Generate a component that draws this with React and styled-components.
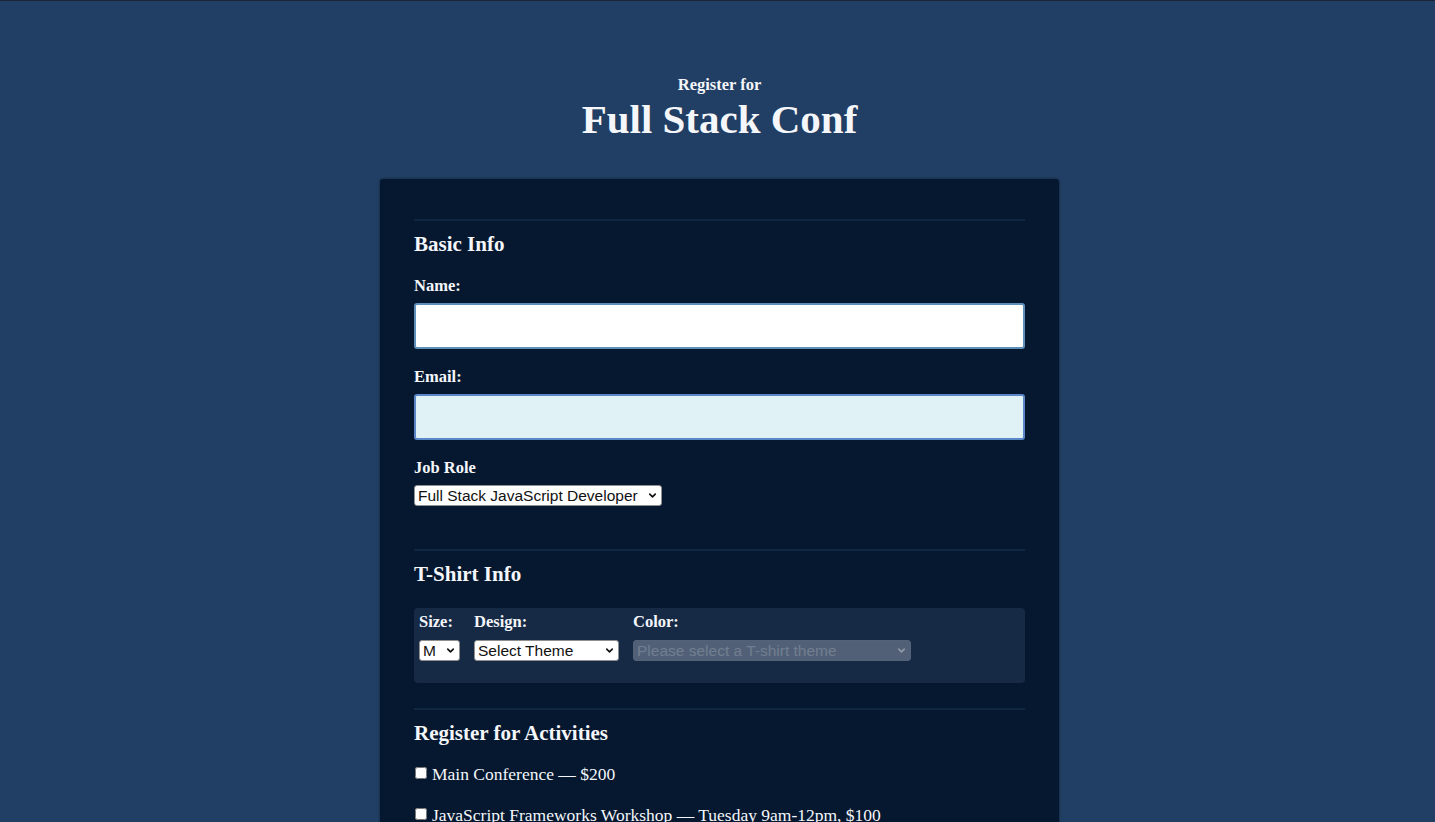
import React, { useState } from "react";
import styled, { createGlobalStyle } from "styled-components";
import { ChevronDown } from "lucide-react";

const GlobalStyle = createGlobalStyle`
  html, body {
    margin: 0;
    padding: 0;
  }
  body {
    background: #213e64;
    border-top: 1px solid #1a2436;
    padding-left: 4px;
    font-family: "Liberation Serif", "Times New Roman", serif;
    color: #f4f6fa;
  }
`;

const activities = [
  "Main Conference — $200",
  "JavaScript Frameworks Workshop — Tuesday 9am-12pm, $100",
  "JavaScript Libraries Workshop — Tuesday 1pm-4pm, $100",
  "Express Workshop — Tuesday 9am-12pm, $100",
  "Node.js Workshop — Tuesday 1pm-4pm, $100",
];

const App = () => {
  const [role, setRole] = useState("full-stack");
  const [size, setSize] = useState("medium");
  const [design, setDesign] = useState("");

  return (
    <>
      <GlobalStyle />
      <Header>
        <Kicker>Register for</Kicker>
        <Title>Full Stack Conf</Title>
      </Header>
      <Card>
        <Section>
          <Legend>Basic Info</Legend>
          <Label htmlFor="name">Name:</Label>
          <TextInput id="name" type="text" />
          <Label htmlFor="mail">Email:</Label>
          <TextInput id="mail" type="email" focused />
          <Label htmlFor="title">Job Role</Label>
          <SelectWrap>
            <Select
              id="title"
              width={248}
              value={role}
              onChange={(e) => setRole(e.target.value)}
            >
              <option value="full-stack">Full Stack JavaScript Developer</option>
              <option value="front-end">Front End Developer</option>
              <option value="back-end">Back End Developer</option>
              <option value="other">Other</option>
            </Select>
            <Chevron />
          </SelectWrap>
        </Section>

        <Section gapTop={43}>
          <Legend>T-Shirt Info</Legend>
          <ShirtBox>
            <ShirtCol>
              <Label htmlFor="size">Size:</Label>
              <SelectWrap>
                <Select
                  id="size"
                  width={41}
                  value={size}
                  onChange={(e) => setSize(e.target.value)}
                >
                  <option value="small">S</option>
                  <option value="medium">M</option>
                  <option value="large">L</option>
                </Select>
                <Chevron />
              </SelectWrap>
            </ShirtCol>
            <ShirtCol>
              <Label htmlFor="design">Design:</Label>
              <SelectWrap>
                <Select
                  id="design"
                  width={145}
                  value={design}
                  onChange={(e) => setDesign(e.target.value)}
                >
                  <option value="">Select Theme</option>
                  <option value="js puns">Theme - JS Puns</option>
                  <option value="heart js">Theme - I ♥ JS</option>
                </Select>
                <Chevron />
              </SelectWrap>
            </ShirtCol>
            <ShirtCol>
              <Label htmlFor="color">Color:</Label>
              <SelectWrap>
                <Select id="color" width={278} disabled defaultValue="">
                  <option value="">Please select a T-shirt theme</option>
                </Select>
                <Chevron disabled />
              </SelectWrap>
            </ShirtCol>
          </ShirtBox>
        </Section>

        <Section gapTop={25}>
          <Legend>Register for Activities</Legend>
          <ActivityList>
            {activities.map((a) => (
              <Activity key={a}>
                <input type="checkbox" />
                <span>{a}</span>
              </Activity>
            ))}
          </ActivityList>
        </Section>
      </Card>
    </>
  );
};

export default App;

const Header = styled.header`
  display: flex;
  flex-direction: column;
  align-items: center;
  padding-top: 72px;
  margin-bottom: 38px;
`;

const Kicker = styled.div`
  font-size: 16.5px;
  font-weight: 700;
  line-height: 24px;
`;

const Title = styled.h1`
  margin: 0;
  font-size: 41px;
  font-weight: 700;
  line-height: 44px;
`;

const Card = styled.main`
  width: 679px;
  margin: 0 auto;
  box-sizing: border-box;
  padding: 40px 34px 60px;
  background: #051830;
  border-radius: 3px;
  box-shadow: 0 0 3px rgba(0, 0, 0, 0.45);
`;

const Section = styled.fieldset`
  margin: ${(p) => p.gapTop || 0}px 0 0;
  padding: 0;
  border: none;
  border-top: 2px solid #0f2741;
  display: flex;
  flex-direction: column;
  align-items: flex-start;
`;

const Legend = styled.h2`
  margin: 9px 0 17px;
  font-size: 21px;
  font-weight: 700;
  line-height: 28px;
`;

const Label = styled.label`
  display: block;
  font-size: 16.5px;
  font-weight: 700;
  line-height: 22px;
  margin-bottom: 6px;
`;

const TextInput = styled.input`
  width: 100%;
  height: 46px;
  box-sizing: border-box;
  margin-bottom: 17px;
  border-radius: 3px;
  border: 2px solid ${(p) => (p.focused ? "#5b86c8" : "#5d8fb8")};
  background: ${(p) => (p.focused ? "#e1f2f7" : "#ffffff")};
  font-size: 16px;
  padding: 0 10px;
  outline: none;
`;

const SelectWrap = styled.div`
  position: relative;
  display: inline-block;
`;

const Select = styled.select`
  appearance: none;
  -webkit-appearance: none;
  width: ${(p) => p.width}px;
  height: 21px;
  box-sizing: border-box;
  margin: 0;
  padding: 0 15px 0 3px;
  border: 1px solid #8f8f8f;
  border-radius: 3px;
  background: #ffffff;
  color: #111;
  font-family: "Liberation Sans", Arial, sans-serif;
  font-size: 15.5px;
  line-height: 19px;

  &:disabled {
    background: #6b788c;
    border-color: #6f7b8e;
    color: #98a2b0;
  }
`;

const ChevronIcon = styled(ChevronDown)`
  position: absolute;
  right: 4px;
  top: 5px;
  width: 11px;
  height: 11px;
  pointer-events: none;
  color: ${(p) => (p.$disabled ? "#8f99a8" : "#111")};
`;

const Chevron = ({ disabled }) => <ChevronIcon $disabled={disabled} strokeWidth={3.5} />;

const ShirtBox = styled.div`
  align-self: stretch;
  display: flex;
  gap: 14px;
  margin-top: 3px;
  padding: 3px 5px 22px;
  background: #162a46;
  border-radius: 4px;
`;

const ShirtCol = styled.div`
  display: flex;
  flex-direction: column;
  align-items: flex-start;

  label {
    margin-bottom: 7px;
  }
`;

const ActivityList = styled.div`
  display: flex;
  flex-direction: column;
  gap: 17px;
  margin-top: -2px;
`;

const Activity = styled.label`
  display: flex;
  align-items: center;
  font-size: 17.5px;
  line-height: 24px;

  input {
    width: 12px;
    height: 12px;
    margin: 0 5px 2px 1px;
  }
`;
